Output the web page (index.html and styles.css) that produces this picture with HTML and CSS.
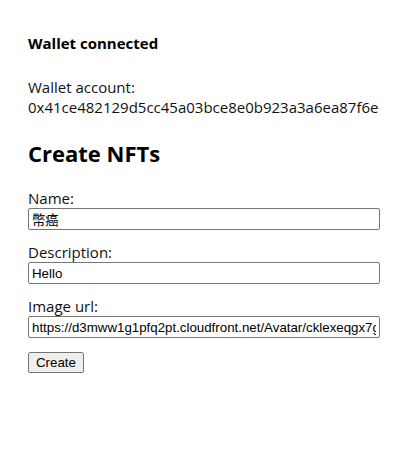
FILE: index.html
```html
<!DOCTYPE html>
<html lang="en">
<head>
<meta charset="utf-8">
<title>Create NFTs</title>
<link rel="stylesheet" href="styles.css">
</head>
<body>
<div class="app">
  <p class="status">Wallet connected</p>
  <div class="account">
    <div>Wallet account:</div>
    <div>0x41ce482129d5cc45a03bce8e0b923a3a6ea87f6e</div>
  </div>
  <h1 class="title">Create NFTs</h1>
  <form class="form">
    <label class="field">
      <span class="label">Name:</span>
      <input class="input" type="text" value="幣癌">
    </label>
    <label class="field">
      <span class="label">Description:</span>
      <input class="input" type="text" value="Hello">
    </label>
    <label class="field">
      <span class="label">Image url:</span>
      <input class="input" type="text" value="https://d3mww1g1pfq2pt.cloudfront.net/Avatar/cklexeqgx7g0h0a12b3c4d5e6">
    </label>
    <div class="actions">
      <button class="button" type="button">Create</button>
    </div>
  </form>
</div>
</body>
</html>
```

FILE: styles.css
```css
html, body {
  margin: 0;
  padding: 0;
  background: #fff;
}
body {
  font-family: "Open Sans", "Noto Sans", sans-serif;
  font-size: 15px;
  color: #000;
}
.app {
  padding: 32px 28px 28px 28px;
  display: flex;
  flex-direction: column;
}
.status {
  margin: 0;
  font-weight: bold;
  font-size: 15px;
  line-height: 22px;
}
.account {
  margin-top: 23px;
  line-height: 20px;
  color: #111;
}
.title {
  margin: 21px 0 0 0;
  font-size: 22px;
  line-height: 30px;
  font-weight: bold;
}
.form {
  display: flex;
  flex-direction: column;
  margin-top: 20px;
  gap: 12px;
}
.field {
  display: flex;
  flex-direction: column;
}
.label {
  line-height: 20px;
  color: #111;
}
.input {
  box-sizing: border-box;
  width: 352px;
  height: 22px;
  margin: 0;
  padding: 1px 3px;
  font-family: "Liberation Sans", Arial, "Noto Sans CJK TC", sans-serif;
  font-size: 13.3px;
  border: 1px solid #767676;
  border-radius: 2px;
  color: #000;
}
.actions {
  margin-top: 1px;
}
.button {
  box-sizing: border-box;
  height: 21px;
  padding: 0 7px;
  font-family: "Liberation Sans", Arial, sans-serif;
  font-size: 13.3px;
  background: #efefef;
  border: 1px solid #767676;
  border-radius: 2px;
  color: #000;
}
```
